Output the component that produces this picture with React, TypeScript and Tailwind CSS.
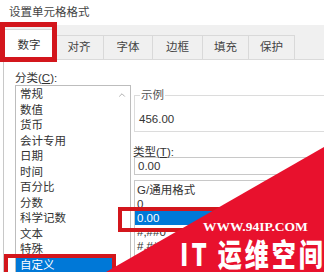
import { ChevronUp } from "lucide-react";

const CATS = ["常规", "数值", "货币", "会计专用", "日期", "时间", "百分比", "分数", "科学记数", "文本", "特殊", "自定义"];
const TYPES = ["G/通用格式", "0", "0.00", "#,##0", "#,##0.00"];
const TABS = [
  { label: "对齐", w: "w-[49px]" },
  { label: "字体", w: "w-[49px]" },
  { label: "边框", w: "w-[50px]" },
  { label: "填充", w: "w-[46px]" },
  { label: "保护", w: "w-[46px]" },
];

export default function App() {
  return (
    <div
      className="relative w-[324px] h-[272px] overflow-hidden bg-white text-[11.5px] text-[#333]"
      style={{ fontFamily: '"Liberation Sans", "Noto Sans CJK SC", sans-serif' }}
    >
      {/* title */}
      <div className="h-[25px] pl-[9px] flex items-center text-[#444]">设置单元格格式</div>

      {/* tabs */}
      <div className="h-[35px] bg-[#f0f0f0] flex items-end pl-[3px] border-b border-[#dadada]">
        <div className="w-[52px] h-[30px] bg-white border border-b-0 border-[#d9d9d9] flex items-center justify-center pt-[2px]">
          数字
        </div>
        {TABS.map((t) => (
          <div
            key={t.label}
            className={`${t.w} h-[24px] border border-l-0 border-b-0 border-[#d9d9d9] flex items-center justify-center text-[#444]`}
          >
            {t.label}
          </div>
        ))}
      </div>

      {/* body */}
      <div className="ml-[3px] border-l border-[#c8c8c8] h-[212px] flex">
        <div className="w-[127px] pl-[11px] pt-[11px]">
          <div className="h-[15px] leading-[15px]">
            分类(<span className="underline">C</span>):
          </div>
          <div className="mt-[-1px] h-[200px] border border-[#bdbdbd] flex">
            <div className="flex-1 pt-[1px] pr-[1px]">
              {CATS.map((c) => (
                <div
                  key={c}
                  className={`h-[15.5px] leading-[15.5px] pl-[4px] ${c === "自定义" ? "bg-[#0078d7] text-white" : ""}`}
                >
                  {c}
                </div>
              ))}
            </div>
            <div className="w-[17px] flex justify-center pt-[4px]">
              <ChevronUp className="w-[10px] h-[10px] text-[#a0a0a0]" strokeWidth={2} />
            </div>
          </div>
        </div>

        <div className="flex-1 pl-[3px] pt-[35px]">
          <div className="relative h-[37px] border border-[#dcdcdc] mr-[-10px] pl-[4px] pt-[15px]">
            <span className="absolute left-[5px] top-[-9px] bg-white px-[1px] text-[#555]">示例</span>
            456.00
          </div>
          <div className="mt-[14px] ml-[-1px] h-[12px] leading-[12px]">
            类型(<span className="underline">T</span>):
          </div>
          <div className="mt-[-1px] h-[18px] border border-[#c8c8c8] mr-[-10px] pl-[3px] leading-[16px]">0.00</div>
          <div className="mt-[5px] h-[100px] border border-[#c8c8c8] mr-[-10px] pt-[2px]">
            {TYPES.map((t) => (
              <div
                key={t}
                className={`h-[14px] leading-[14px] pl-[2px] ${t === "0.00" ? "bg-[#0078d7] text-white" : ""}`}
              >
                {t}
              </div>
            ))}
          </div>
        </div>
      </div>

      {/* red highlight frames */}
      <div className="absolute left-0 top-[22px] w-[57px] h-[40px] border-[5px] border-[#d3161c]" />
      <div className="absolute left-[4px] top-[254px] w-[112px] h-[26px] border-[4px] border-[#d3161c]" />
      <div className="absolute left-[118px] top-[207px] w-[130px] h-[25px] border-[4px] border-[#d3161c]" />

      {/* watermark */}
      <svg className="absolute left-0 top-0" width="324" height="272" viewBox="0 0 324 272">
        <polygon points="324,147 324,272 106,272" fill="#e8112d" />
      </svg>
      <div
        className="absolute left-[203px] top-[219px] whitespace-nowrap text-white font-bold text-[13.5px] leading-[16px]"
        style={{ fontFamily: '"Liberation Serif", serif' }}
      >
        WWW.94IP.COM
      </div>
      <div
        className="absolute left-[180px] top-[245px] w-max whitespace-nowrap text-white font-black text-[24px] leading-[24px] origin-bottom scale-y-[1.3]"
        style={{ fontFamily: '"Noto Sans CJK SC", sans-serif' }}
      >
        <span className="tracking-[3px]">IT</span>
        <span className="ml-[8px] tracking-[3px]">运维空间</span>
      </div>
    </div>
  );
}
